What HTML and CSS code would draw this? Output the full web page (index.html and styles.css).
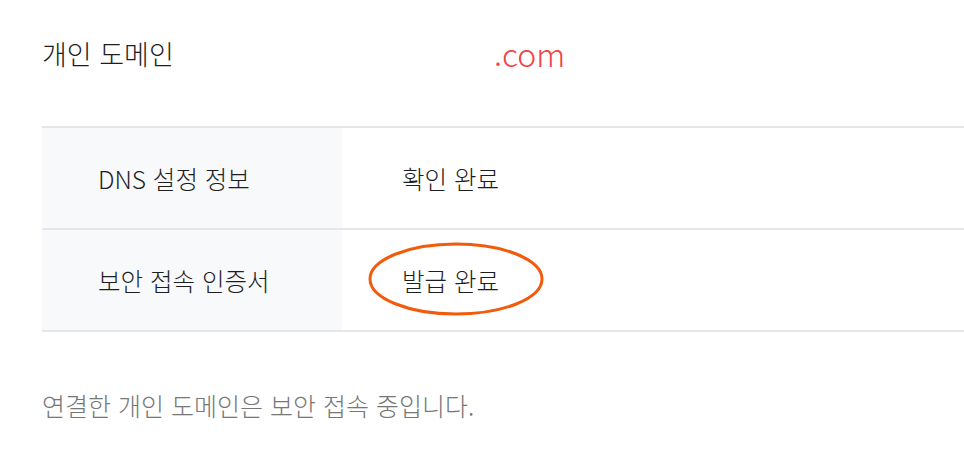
FILE: index.html
```html
<!DOCTYPE html>
<html lang="ko">
<head>
    <meta charset="UTF-8">
    <title>개인 도메인</title>
    <link rel="stylesheet" href="styles.css">
</head>
<body>

    <div class="domain-page">
        <div class="domain-head">
            <h2>개인 도메인</h2>
            <span class="domain-name">.com</span>
        </div>

        <table class="status-table">
            <tr>
                <th>DNS 설정 정보</th>
                <td>확인 완료</td>
            </tr>
            <tr>
                <th>보안 접속 인증서</th>
                <td>
                    <span class="marked">
                        발급 완료
                        <svg class="circle-mark" width="180" height="78" viewBox="0 0 180 78">
                            <ellipse cx="90" cy="39" rx="86" ry="35" fill="none" stroke="#f25b0c" stroke-width="3"/>
                        </svg>
                    </span>
                </td>
            </tr>
        </table>

        <p class="note">연결한 개인 도메인은 보안 접속 중입니다.</p>
    </div>

</body>
</html>
```

FILE: styles.css
```css
body {
    font-family: "Noto Sans CJK KR", "Noto Sans", sans-serif;
    font-weight: 300;
    margin: 0;
    color: #1e1e1e;
}
.domain-page {
    padding: 33px 0 0 42px;
}
.domain-head {
    display: flex;
    align-items: center;
    height: 40px;
}
.domain-head h2 {
    font-size: 27px;
    font-weight: 300;
    margin: 0;
    width: 452px;
}
.domain-name {
    font-size: 32px;
    color: #f24444;
}
.status-table {
    width: 100%;
    margin-top: 53px;
    border-collapse: collapse;
    border-top: 2px solid #e6e6ea;
}
.status-table tr {
    border-bottom: 2px solid #e6e6ea;
}
.status-table th,
.status-table td {
    height: 100px;
    padding: 0;
    font-size: 24.5px;
    font-weight: 300;
    text-align: left;
}
.status-table th {
    width: 244px;
    padding-left: 56px;
    background: #f8f9fa;
}
.status-table td {
    padding-left: 60px;
}
.marked {
    position: relative;
}
.circle-mark {
    position: absolute;
    left: -36px;
    top: -23px;
}
.note {
    margin: 55px 0 0;
    font-size: 25px;
    color: #777;
}
```
